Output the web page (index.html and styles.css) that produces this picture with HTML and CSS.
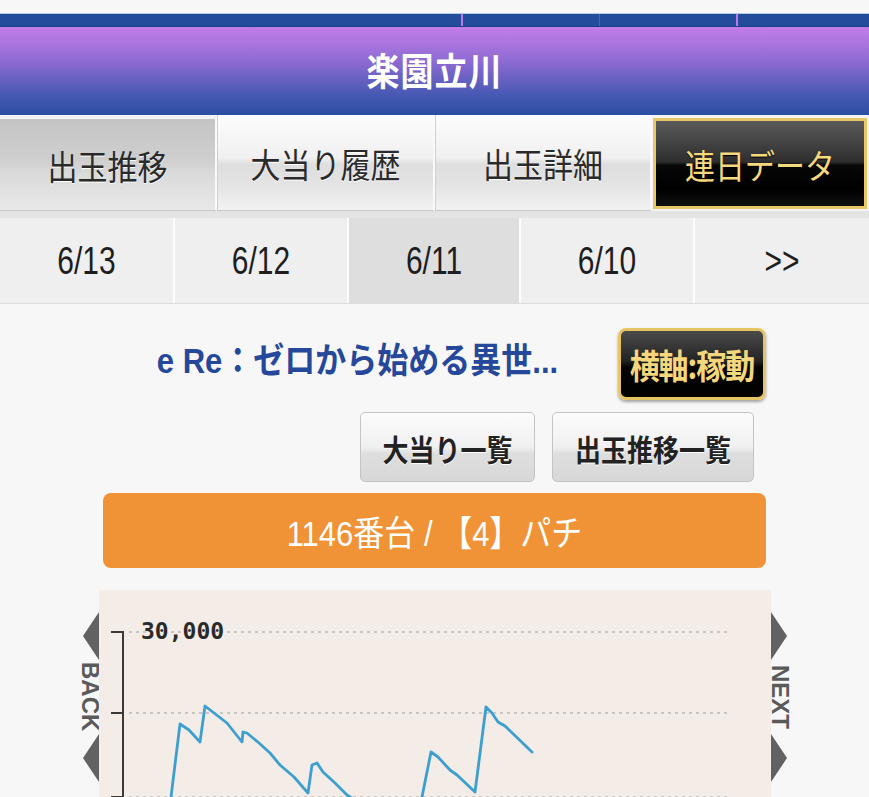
FILE: index.html
```html
<!DOCTYPE html>
<html lang="ja">
<head>
<meta charset="utf-8">
<title>楽園立川 - 連日データ</title>
<link rel="stylesheet" href="styles.css">
</head>
<body>
<div class="topstrip"></div>
<div class="topnav">
  <span class="tn tn1"></span><span class="tn tn2"></span><span class="tn tn3"></span><span class="tn tn4"></span>
</div>
<header class="hdr">
  <h1 class="hdr-title"><span class="sy">楽園立川</span></h1>
</header>
<nav class="tabs">
  <a class="tab tab-gray"><span class="sy">出玉推移</span></a>
  <a class="tab"><span class="sy">大当り履歴</span></a>
  <a class="tab"><span class="sy">出玉詳細</span></a>
  <a class="tab tab-gold"><span class="sy">連日データ</span></a>
</nav>
<div class="tabgap"></div>
<nav class="dates">
  <a class="date"><span class="sy-l">6/13</span></a>
  <a class="date"><span class="sy-l">6/12</span></a>
  <a class="date date-on"><span class="sy-l">6/11</span></a>
  <a class="date"><span class="sy-l">6/10</span></a>
  <a class="date"><span class="sy-l">&gt;&gt;</span></a>
</nav>
<main class="content">
  <div class="title-row">
    <h2 class="model"><span class="sy">e Re：ゼロから始める異世...</span></h2>
    <a class="axis-btn"><span class="sy">横軸:稼動</span></a>
  </div>
  <div class="btn-row">
    <a class="btn btn-a"><span class="sy">大当り一覧</span></a>
    <a class="btn btn-b"><span class="sy">出玉推移一覧</span></a>
  </div>
  <div class="machine"><span class="sy">1146番台 / 【4】パチ</span></div>
  <div class="chart-wrap">
    <div class="pager">
      <svg class="tri" width="18" height="48" viewBox="0 0 18 48"><polygon points="18,0 2,24 18,48" /></svg>
      <span class="pager-text">BACK</span>
      <svg class="tri" width="18" height="48" viewBox="0 0 18 48"><polygon points="18,0 2,24 18,48" /></svg>
    </div>
    <div class="chart">
      <svg class="chart-svg" width="672" height="230" viewBox="0 0 672 230">
        <g class="grid">
          <line x1="30" y1="42" x2="631" y2="42" />
          <line x1="30" y1="123" x2="631" y2="123" />
          <line x1="30" y1="207" x2="631" y2="207" />
        </g>
        <g class="axis">
          <line x1="24" y1="41" x2="24" y2="230" />
          <line x1="12" y1="42" x2="25" y2="42" />
          <line x1="12" y1="123" x2="25" y2="123" />
          <line x1="12" y1="207" x2="25" y2="207" />
        </g>
        <text class="ylabel" x="42" y="49">30,000</text>
        <polyline class="series" points="66,240 72,207 81,134 90,140 101,152 106,116 115,123 128,133 143,152 144,142 148,143 160,153 171,163 181,175 195,187 209,203 213,175 218,173 224,182 236,193 248,205 262,214 281,209 300,222 315,214 323,207 332,162 339,167 351,180 358,185 376,202 387,117 393,123 399,132 406,136 433,162" />
      </svg>
    </div>
    <div class="pager">
      <svg class="tri" width="18" height="48" viewBox="0 0 18 48"><polygon points="0,0 16,24 0,48" /></svg>
      <span class="pager-text">NEXT</span>
      <svg class="tri" width="18" height="48" viewBox="0 0 18 48"><polygon points="0,0 16,24 0,48" /></svg>
    </div>
  </div>
</main>
</body>
</html>
```
FILE: styles.css
```css
* { box-sizing: border-box; }
html, body { margin: 0; padding: 0; }
body {
  background: #f7f7f7;
  font-family: "Liberation Sans", "Noto Sans CJK JP", sans-serif;
  color: #222;
  overflow: hidden;
}
a { text-decoration: none; color: inherit; }

.sy { display: inline-block; transform: scaleY(1.15); white-space: nowrap; }
.sy-l { display: inline-block; transform: scaleY(1.3); white-space: nowrap; }

.topstrip { height: 13px; background: #f7f7f7; }
.topnav {
  display: flex;
  height: 14px;
  background: #244c9c;
  border-top: 1px solid #b4cbe6;
  border-bottom: 1px solid #1d3f88;
}
.tn { display: block; height: 100%; }
.tn1 { width: 461px; }
.tn2 { width: 138px; border-left: 2px solid #b878e6; }
.tn3 { width: 137px; border-left: 1px solid #4a64b8; }
.tn4 { flex: 1; border-left: 2px solid #b878e6; }

.hdr {
  height: 88px;
  display: flex;
  align-items: center;
  justify-content: center;
  background: linear-gradient(#c37de9 0%, #8c6ad2 40%, #4a5ab4 75%, #2a4ea2 100%);
}
.hdr-title {
  margin: 0 0 4px 0;
  color: #fff;
  font-family: "Noto Sans CJK JP", sans-serif;
  font-size: 33px;
  font-weight: 700;
  letter-spacing: 1px;
}

.tabs {
  display: grid;
  grid-template-columns: 217px 218px 217px 217px;
  height: 96px;
  background: #f4f4f4;
}
.tab {
  display: flex;
  align-items: center;
  justify-content: center;
  font-family: "Noto Sans CJK JP", sans-serif;
  font-size: 30px;
  color: #2a2a2a;
  text-shadow: 0 1px 0 #fff;
  background: linear-gradient(#fdfdfd 0%, #f0f0f0 45%, #dedede 52%, #e4e4e4 75%, #f2f2f2 100%);
  border-right: 2px solid #fafafa;
  border-left: 1px solid #d0d0d0;
  border-bottom: 1px solid #c8c8c8;
}
.tab:first-child { border-left: 0; }
.tab-gray {
  background: linear-gradient(#c4c4c4 0%, #cfcfcf 45%, #dadada 60%, #e8e8e8 100%);
  border-top: 4px solid #f2f2f2;
}
.tab-gold {
  margin: 3px 2px 2px 1px;
  border: 3px solid #e8c867;
  color: #f6d97e;
  text-shadow: 0 1px 1px #000;
  background: linear-gradient(#5a5a5a 0%, #2e2e2e 48%, #070707 52%, #000 80%, #111 100%);
}

.tabgap { height: 7px; background: #e4e4e4; }

.dates {
  display: grid;
  grid-template-columns: 175px 174px 172px 174px 174px;
  height: 86px;
  border-bottom: 1px solid #dcdcdc;
}
.date {
  display: flex;
  align-items: center;
  justify-content: center;
  background: #efefef;
  border-right: 2px solid #fdfdfd;
  font-size: 30px;
  color: #1e1e1e;
}
.date:last-child { border-right: 0; }
.date-on { background: #dedede; }

.content {
  display: flex;
  flex-direction: column;
  align-items: center;
  padding-top: 24px;
}
.title-row {
  width: 663px;
  display: flex;
  align-items: center;
  height: 72px;
}
.model {
  flex: 1;
  margin: 0 6px 0 0;
  padding-bottom: 14px;
  text-align: center;
  color: #26489a;
  font-family: "Liberation Sans", "Noto Sans CJK JP", sans-serif;
  font-size: 31px;
  font-weight: 700;
  white-space: nowrap;
}
.axis-btn {
  width: 148px;
  height: 72px;
  display: flex;
  align-items: center;
  justify-content: center;
  border: 3px solid #e6c466;
  border-radius: 8px;
  background: linear-gradient(#4a4a4a 0%, #242424 45%, #050505 55%, #000 100%);
  color: #f4d77c;
  font-family: "Noto Sans CJK JP", sans-serif;
  font-size: 30px;
  font-weight: 700;
  letter-spacing: -1px;
  box-shadow: 0 2px 3px rgba(0,0,0,0.35);
  white-space: nowrap;
}

.btn-row {
  width: 663px;
  display: flex;
  justify-content: flex-end;
  gap: 17px;
  padding-right: 12px;
  margin-top: 12px;
}
.btn {
  height: 70px;
  display: flex;
  align-items: center;
  justify-content: center;
  border: 1px solid #c4c4c4;
  border-radius: 5px;
  background: linear-gradient(#fcfcfc 0%, #f0f0f0 50%, #dedede 60%, #d8d8d8 100%);
  font-family: "Noto Sans CJK JP", sans-serif;
  font-size: 26px;
  font-weight: 700;
  color: #222;
  text-shadow: 0 1px 0 #fff;
  white-space: nowrap;
}
.btn-a { width: 175px; }
.btn-b { width: 202px; }

.machine {
  width: 663px;
  height: 75px;
  margin-top: 11px;
  display: flex;
  align-items: center;
  justify-content: center;
  background: #ef9336;
  border-radius: 8px;
  color: #fff;
  font-size: 31px;
}

.chart-wrap {
  display: flex;
  margin-top: 22px;
}
.pager {
  width: 18px;
  display: flex;
  flex-direction: column;
  align-items: center;
  padding-top: 22px;
}
.tri { display: block; fill: #626262; }
.pager-text {
  writing-mode: vertical-rl;
  height: 74px;
  display: flex;
  align-items: center;
  justify-content: center;
  font-size: 24px;
  font-weight: 700;
  color: #5a5a5a;
  line-height: 18px;
}
.chart {
  width: 672px;
  height: 240px;
  background: #f3ece7;
}
.chart-svg { display: block; }
.grid line { stroke: #c9c5c2; stroke-width: 2; stroke-dasharray: 3 4; }
.axis line { stroke: #3a3a3a; stroke-width: 2; }
.ylabel {
  font-family: "DejaVu Sans Mono", monospace;
  font-size: 23px;
  font-weight: 700;
  fill: #2a2a2a;
}
.series {
  fill: none;
  stroke: #3d9fcf;
  stroke-width: 2.8;
  stroke-linejoin: round;
  stroke-linecap: round;
}
```
